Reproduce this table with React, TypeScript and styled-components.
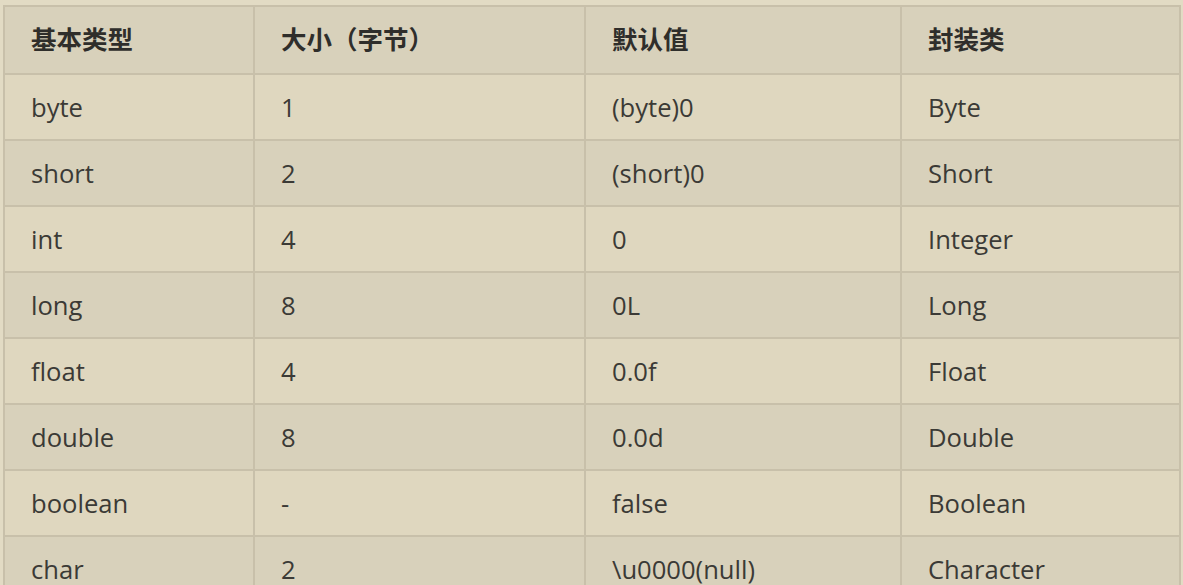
import styled, { createGlobalStyle } from 'styled-components'

const GlobalStyle = createGlobalStyle`
  html, body {
    margin: 0;
    padding: 0;
    background-color: #e2dbc4;
    font-family: 'Open Sans', 'Noto Sans CJK SC', sans-serif;
    overflow: hidden;
  }
`

const Page = styled.div`
  padding: 5px 0 0 3px;
`

const Table = styled.table`
  border-collapse: collapse;
  table-layout: fixed;
  width: 1176px;
  color: #3b3a36;
  font-size: 25.6px;
`

const Col = styled.col<{ $w: number }>`
  width: ${(p) => p.$w}px;
`

const Row = styled.tr<{ $dark?: boolean }>`
  background-color: ${(p) => (p.$dark ? '#d8d1bb' : '#dfd7bf')};
`

const HeadCell = styled.th`
  height: 60px;
  padding: 0 0 6px 26px;
  border: 2px solid #c8c0aa;
  text-align: left;
  font-weight: 700;
  font-family: 'Noto Sans CJK SC', 'Open Sans', sans-serif;
  font-size: 25.5px;
  color: #2f2e2b;
`

const Cell = styled.td`
  height: 64px;
  padding: 0 0 0 26px;
  border: 2px solid #c8c0aa;
  white-space: nowrap;
`

const rows = [
  ['byte', '1', '(byte)0', 'Byte'],
  ['short', '2', '(short)0', 'Short'],
  ['int', '4', '0', 'Integer'],
  ['long', '8', '0L', 'Long'],
  ['float', '4', '0.0f', 'Float'],
  ['double', '8', '0.0d', 'Double'],
  ['boolean', '-', 'false', 'Boolean'],
  ['char', '2', '\\u0000(null)', 'Character'],
]

const App = () => {
  return (
    <Page>
      <GlobalStyle />
      <Table>
        <colgroup>
          <Col $w={250} />
          <Col $w={331} />
          <Col $w={316} />
          <Col $w={279} />
        </colgroup>
        <thead>
          <Row $dark>
            <HeadCell>基本类型</HeadCell>
            <HeadCell>大小（字节）</HeadCell>
            <HeadCell>默认值</HeadCell>
            <HeadCell>封装类</HeadCell>
          </Row>
        </thead>
        <tbody>
          {rows.map((r, i) => (
            <Row key={r[0]} $dark={i % 2 === 1}>
              {r.map((c, j) => (
                <Cell key={j}>{c}</Cell>
              ))}
            </Row>
          ))}
        </tbody>
      </Table>
    </Page>
  )
}

export default App
